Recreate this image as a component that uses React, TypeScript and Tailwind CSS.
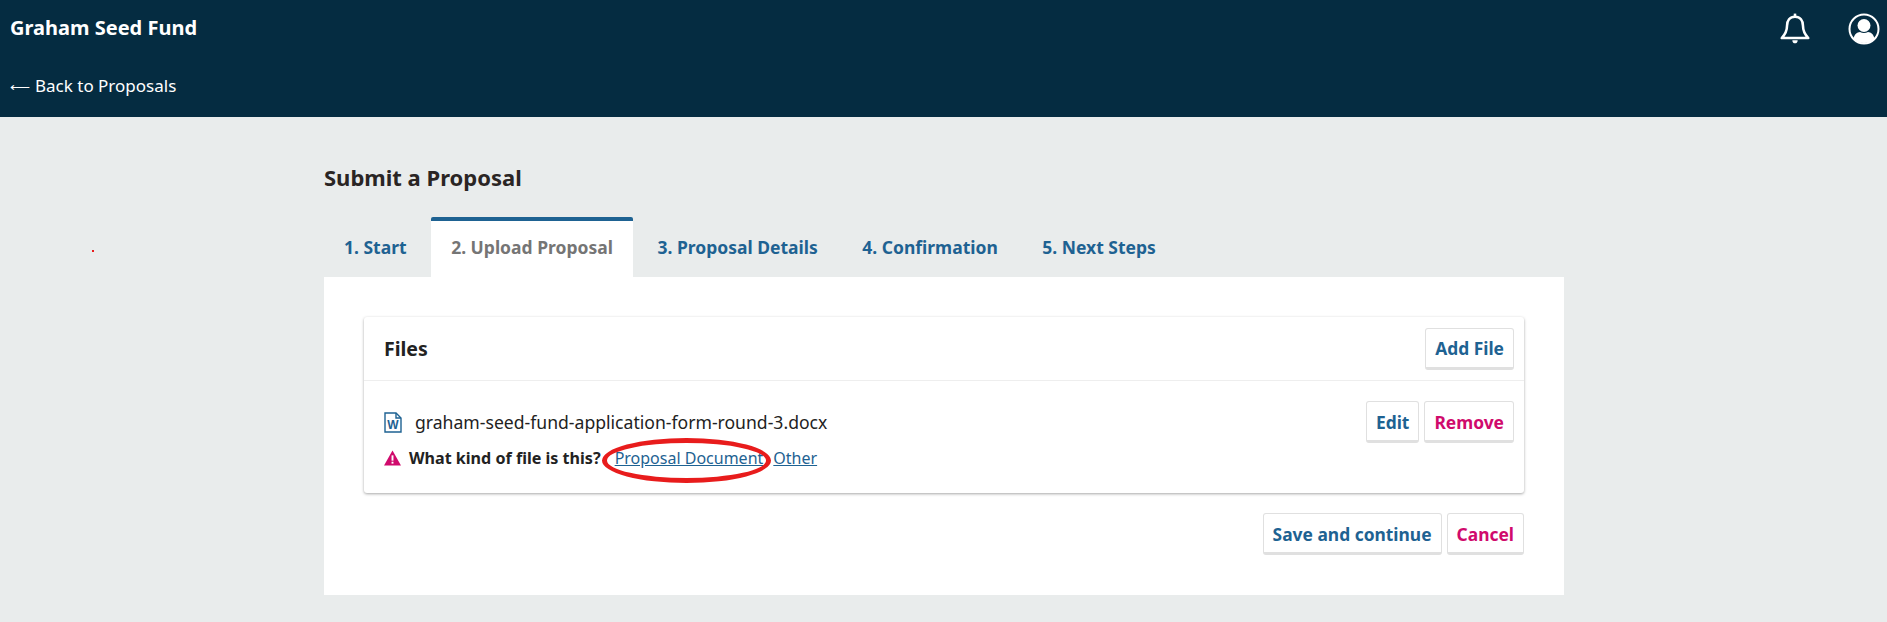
const font = { fontFamily: '"Noto Sans", sans-serif' };

const tabs = ['1. Start', '2. Upload Proposal', '3. Proposal Details', '4. Confirmation', '5. Next Steps'];

function Button({ label, danger }: { label: string; danger?: boolean }) {
    return (
        <button className={`h-[42px] px-[9px] pt-[3px] bg-white border border-[#e0e0e0] border-b-[3px] rounded-[3px] text-[17.400px] font-bold leading-none ${danger ? 'text-[#d00a6c]' : 'text-[#1e6292]'}`}>
            {label}
        </button>
    );
}

function BellIcon() {
    return (
        <svg width="32" height="34" viewBox="0 0 30 32" fill="none" stroke="white" strokeWidth="2.400" strokeLinejoin="round">
            <path d="M15 4.500c-5 0-7.500 3.600-7.500 8.500 0 6-2.200 8.600-5 11.500h25c-2.800-2.900-5-5.500-5-11.500 0-4.900-2.500-8.500-7.500-8.500z" />
            <path d="M15 1.500v3" />
            <path d="M12.500 25.500c0 4 5 4 5 0z" fill="white" stroke="none" transform="translate(0 1)" />
        </svg>
    );
}

function UserIcon() {
    return (
        <svg width="32" height="32" viewBox="0 0 32 32">
            <circle cx="16" cy="16" r="14.500" fill="none" stroke="white" strokeWidth="2" />
            <circle cx="16" cy="12.500" r="6.500" fill="white" />
            <path d="M5.500 25.500c1-4.500 3.500-6 6.500-6.500 2.500 1.300 5.500 1.300 8 0 3 .5 5.500 2 6.500 6.500-2.500 3-6.500 4.500-10.500 4.500s-8-1.500-10.500-4.500z" fill="white" />
        </svg>
    );
}

function WordIcon() {
    return (
        <svg width="18" height="21" viewBox="0 0 18 21" fill="none">
            <path d="M1 1h11l5 5v14H1z" stroke="#1e6292" strokeWidth="1.400" fill="white" />
            <path d="M12 1v5h5" stroke="#1e6292" strokeWidth="1.400" />
            <text x="9" y="17" textAnchor="middle" fontSize="12" fontWeight="700" fill="#1e6292" fontFamily="Liberation Sans, sans-serif">W</text>
        </svg>
    );
}

function WarningIcon() {
    return (
        <svg width="17" height="16" viewBox="0 0 16 15">
            <path d="M8 0.500 L16 14.500 H0 Z" fill="#d00a6c" />
            <rect x="7.100" y="5" width="1.800" height="5" fill="white" />
            <rect x="7.100" y="11" width="1.800" height="1.800" fill="white" />
        </svg>
    );
}

export default function App() {
    return (
        <div className="relative h-[622px] bg-[#e9ecec] overflow-hidden" style={font}>
            <header className="h-[117px] bg-[#052c41] text-white pl-[10px] pr-[7px] flex justify-between">
                <div>
                    <div className="mt-[14px] text-[20px] leading-[27px] font-bold">Graham Seed Fund</div>
                    <div className="mt-[33px] text-[17px] leading-[24px]">
                        <span className="inline-block w-[25px] text-[13.500px]">⟵</span>
                        Back to Proposals
                    </div>
                </div>
                <div className="flex items-center self-start gap-[37px] pt-[12px]">
                    <BellIcon />
                    <UserIcon />
                </div>
            </header>

            <main className="w-[1240px] ml-[324px]">
                <h1 className="mt-[45px] text-[22px] leading-[30px] font-bold text-[#2a2524]">Submit a Proposal</h1>

                <div className="mt-[25px] flex gap-[4.500px] h-[60px]">
                    {tabs.map((tab, index) => (
                        <div
                            key={index}
                            className={`px-5 pb-[4px] flex items-center text-[17.500px] font-bold border-t-[4px] rounded-t-[2px] ${index === 1 ? 'bg-white border-[#1e6292] text-[#757575]' : 'border-transparent text-[#1e6292]'}`}
                        >
                            {tab}
                        </div>
                    ))}
                </div>

                <div className="bg-white h-[318px] px-10 pt-10">
                    <div className="h-[176px] rounded-[3px] shadow-[0_1px_3px_rgba(0,0,0,0.35)]">
                        <div className="h-[64px] pl-5 pr-[10px] flex items-center justify-between border-b border-[#eeeeee]">
                            <h2 className="text-[19.500px] font-bold text-[#222222]">Files</h2>
                            <Button label="Add File" />
                        </div>
                        <div className="pl-5 pr-[10px] pt-5 flex justify-between items-start">
                            <div>
                                <div className="flex items-center gap-[13px] h-[42px]">
                                    <WordIcon />
                                    <span className="text-[17.600px] text-[#222222]">graham-seed-fund-application-form-round-3.docx</span>
                                </div>
                                <div className="flex items-center mt-[3px] text-[16px] leading-[24px]">
                                    <WarningIcon />
                                    <span className="ml-2 text-[16.100px] font-bold text-[#222222]">What kind of file is this?</span>
                                    <a className="ml-[14px] underline text-[#1e6292]">Proposal Document</a>
                                    <a className="ml-[10px] underline text-[#1e6292]">Other</a>
                                </div>
                            </div>
                            <div className="flex gap-[5px]">
                                <Button label="Edit" />
                                <Button label="Remove" danger />
                            </div>
                        </div>
                    </div>
                    <div className="mt-5 flex justify-end gap-[5px]">
                        <Button label="Save and continue" />
                        <Button label="Cancel" danger />
                    </div>
                </div>
            </main>

            {/* hand drawn annotation on top of the screenshot */}
            <div className="absolute left-[602px] top-[438px] w-[169px] h-[45px] rounded-[50%] border-[5px] border-[#e81c1c]" />
            <div className="absolute left-[92px] top-[250px] w-[2px] h-[2px] bg-[#e81c1c]" />
        </div>
    );
}
